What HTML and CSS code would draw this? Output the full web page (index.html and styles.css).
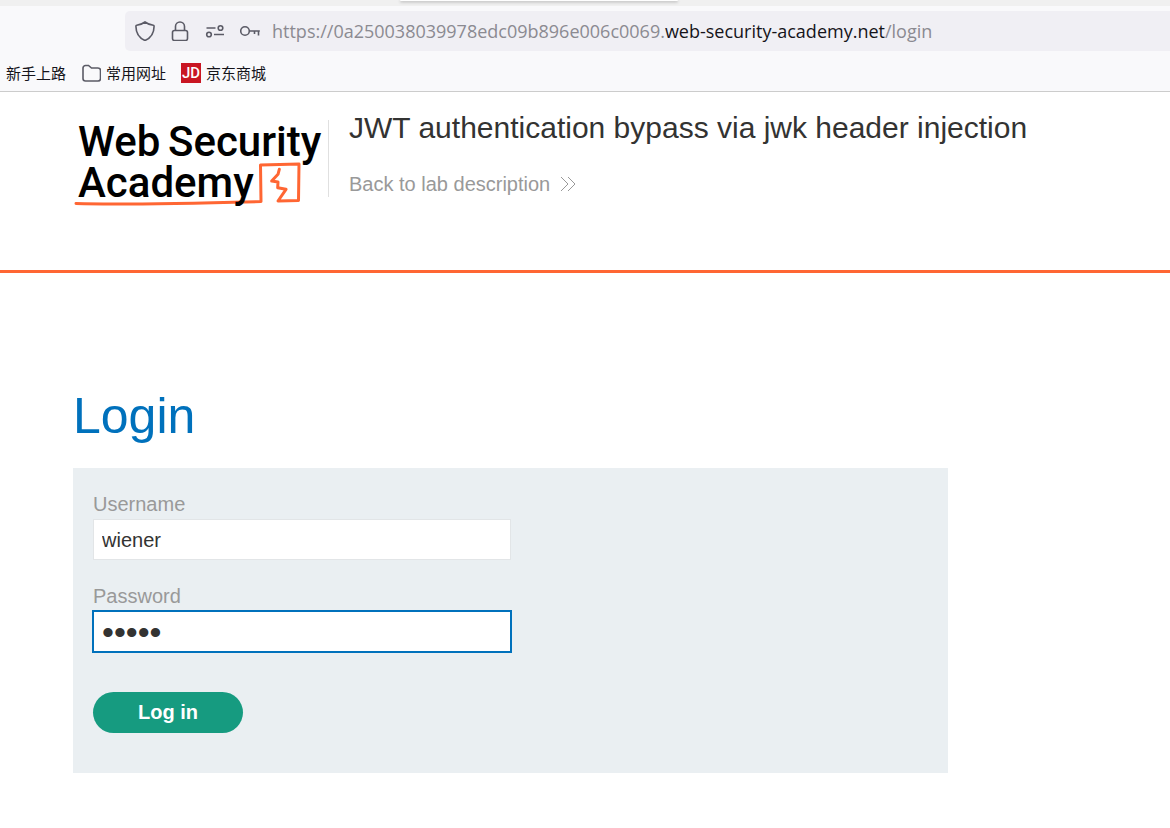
FILE: index.html
```html
<!DOCTYPE html>
<html lang="en">
<head>
<meta charset="utf-8">
<title>JWT authentication bypass via jwk header injection</title>
<link rel="stylesheet" href="styles.css">
</head>
<body>
<div class="browser">
  <div class="tabstrip"><div class="tab-popup"></div></div>
  <div class="toolbar">
    <div class="urlbar">
      <svg class="url-icon" viewBox="0 0 20 20"><path d="M10 1 C7.500 2.900 4.500 3.900 1.700 4.200 C1 4.300 .9 4.700 .9 5.300 C1 12.500 4 17 10 19.500 C16 17 19 12.500 19.100 5.300 C19.100 4.700 19 4.300 18.300 4.200 C15.500 3.900 12.500 2.900 10 1Z"/></svg>
      <svg class="url-icon" viewBox="0 0 20 20"><rect x="2.500" y="9.500" width="15" height="10" rx="2"/><path d="M5.500 9.500V5.500a4.500 4.500 0 0 1 9 0V9.500"/></svg>
      <svg class="url-icon" viewBox="0 0 20 20"><path d="M1.500 7H10.500M9 13.500H19"/><circle cx="15.500" cy="7" r="2.300"/><circle cx="4" cy="13.500" r="2.300"/></svg>
      <svg class="url-icon" viewBox="0 0 20 20"><circle cx="5" cy="10" r="4.300"/><path d="M9.300 10H19.800M14.500 10V13M18.500 10V14.500"/></svg>
      <div class="url">https://0a250038039978edc09b896e006c0069.<span class="domain">web-security-academy.net</span>/login</div>
    </div>
    <nav class="bookmarks">
      <a href="#start">新手上路</a>
      <a href="#sites"><svg class="bookmark-icon folder" viewBox="0 0 20 20"><path d="M2 5a2.500 2.500 0 0 1 2.500-2.500H7.500L10.500 5H17A2.500 2.500 0 0 1 19.500 7.500V15.500A2.500 2.500 0 0 1 17 18H4.500A2.500 2.500 0 0 1 2 15.500Z"/></svg>常用网址</a>
      <a href="#jd"><span class="bookmark-icon jd">JD</span>京东商城</a>
    </nav>
  </div>
</div>
<header class="lab-header">
  <a class="logo" href="#academy" aria-label="Web Security Academy">
    <svg viewBox="0 0 250 92" width="250" height="92">
      <path class="logo-line" d="M2 87.500 C50 89 130 87 187 85.500 L186.500 49 L225 48 L224.500 84.500 L204 85 L212 73.300 L203.700 71.700 L204 66 L197.700 65 L204 58.300 L205.300 53.300"/>
      <g class="logo-text">
        <text x="4" y="40">Web</text><text x="94" y="40">Security</text>
        <text x="4" y="81">Academy</text>
      </g>
    </svg>
  </a>
  <div class="lab-info">
    <h2>JWT authentication bypass via jwk header injection</h2>
    <a class="back" href="#description">Back to lab description
      <svg viewBox="0 0 16 16" width="16" height="16"><path d="M1 1 L8 8 L1 15M8 1 L15 8 L8 15"/></svg>
    </a>
  </div>
</header>
<main>
  <h1>Login</h1>
  <form class="login">
    <label for="username">Username</label>
    <input id="username" type="text" value="wiener">
    <label for="password">Password</label>
    <input id="password" class="active" type="password" value="peter">
    <button type="button">Log in</button>
  </form>
</main>
</body>
</html>
```
FILE: styles.css
```css
* { box-sizing: border-box; }
body {
  margin: 0;
  background: #fff;
  color: #333332;
  font: 20px/24px "Liberation Sans", Arial, sans-serif;
}
a { color: inherit; text-decoration: none; }
svg { display: block; flex: none; }
.browser { border-bottom: 1px solid #ccc; background: #f9f9fb; }
.tabstrip { height: 6px; background: #f0f0f0; overflow: hidden; }
.tab-popup {
  width: 278px;
  height: 1px;
  margin-left: 400px;
  background: #fff;
  border-radius: 0 0 4px 4px;
  box-shadow: 0 1px 3px #888;
}
.toolbar { padding-top: 5px; }
.urlbar {
  display: flex;
  align-items: center;
  gap: 15px;
  height: 40px;
  margin-left: 125px;
  padding-left: 10px;
  border-radius: 5px 0 0 5px;
  background: #f0eff4;
}
.url-icon {
  width: 20px;
  height: 20px;
  fill: none;
  stroke: #5b5b66;
  stroke-width: 1.6;
}
.url {
  margin-left: -3px;
  color: #8b8a91;
  font: 18px/28px "Open Sans", "Noto Sans", sans-serif;
  white-space: nowrap;
}
.domain { color: #15141a; }
.bookmarks {
  display: flex;
  gap: 15px;
  height: 40px;
  padding: 0 0 0 6px;
  align-items: center;
  color: #15141a;
  font: 15px/20px "Noto Sans CJK SC", sans-serif;
}
.bookmarks a { display: flex; align-items: center; gap: 5px; padding-top: 4px; }
.bookmark-icon { width: 20px; height: 20px; }
.folder { fill: none; stroke: #5b5b66; stroke-width: 1.6; }
.jd {
  background: #c91623;
  color: #fff;
  font: 500 15px/20px Roboto, sans-serif;
  text-align: center;
}
.lab-header {
  display: flex;
  min-height: 181px;
  padding: 16px 74px 0;
  border-bottom: 3px solid #ff6633;
}
.logo { align-self: flex-start; padding-top: 8px; }
.logo svg { overflow: visible; }
.logo-text { font: 500 42px Roboto, sans-serif; fill: #000; }
.logo-line { fill: none; stroke: #ff6633; stroke-width: 3; stroke-linejoin: round; stroke-linecap: round; }
.lab-info {
  align-self: flex-start;
  margin-left: 4px;
  padding-left: 21px;
  background: linear-gradient(#e0e0e0, #e0e0e0) 0 12px / 1px 77px no-repeat;
}
.lab-info h2 { margin: 0 0 18px; font-size: 30px; line-height: 40px; font-weight: 400; }
.back { display: flex; align-items: center; gap: 10px; height: 36px; color: #999; }
.back svg { fill: none; stroke: #999; stroke-width: 1; }
main { padding: 111px 222px 55px 73px; }
h1 { margin: 0 0 20px; color: #0071bc; font-size: 50px; line-height: 64px; font-weight: 400; }
.login {
  display: flex;
  flex-direction: column;
  align-items: flex-start;
  padding: 24px 20px 40px;
  background: #eaeff2;
}
.login label { color: #999; line-height: 24px; margin-bottom: 3px; }
.login input {
  width: 50%;
  height: 41px;
  margin-bottom: 24px;
  padding: 2px 8px 0;
  border: 1px solid #e2e5e7;
  border-radius: 0;
  outline: none;
  background: #fff;
  color: #333332;
  font: inherit;
}
.login .active {
  border-color: #0071bc;
  box-shadow: 0 0 0 1px #0071bc;
  font-size: 34px;
}
.login button {
  width: 150px;
  height: 41px;
  margin-top: 16px;
  padding: 0 0 2px;
  border: 0;
  border-radius: 21px;
  background: #169b80;
  color: #fff;
  font: bold 20px/24px "Liberation Sans", Arial, sans-serif;
}
```
